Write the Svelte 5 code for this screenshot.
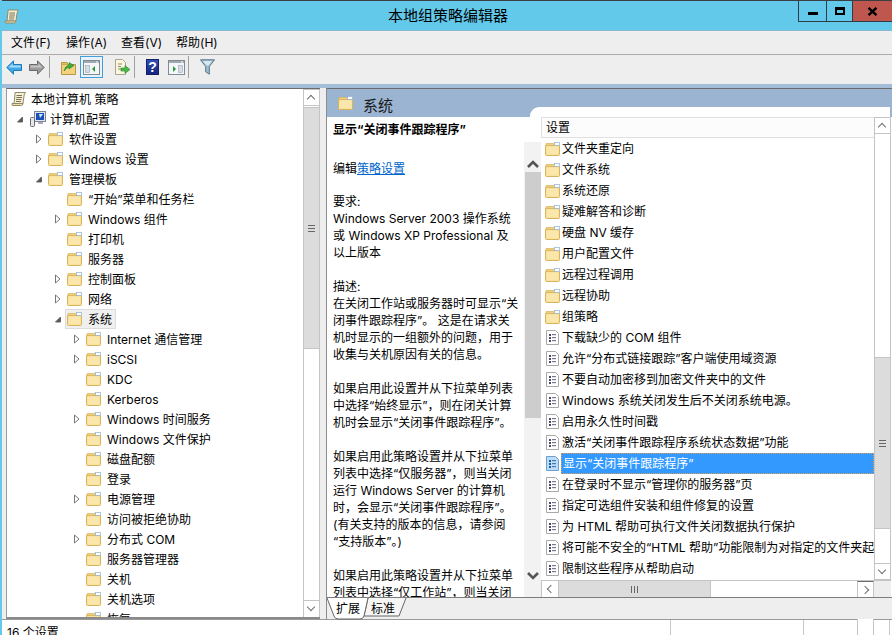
<script>
  const tree = [
    { t: '本地计算机 策略', l: 0, i: 'scroll' },
    { t: '计算机配置', l: 1, i: 'pc', a: 'o' },
    { t: '软件设置', l: 2, a: 'c' },
    { t: 'Windows 设置', l: 2, a: 'c' },
    { t: '管理模板', l: 2, a: 'o' },
    { t: '“开始”菜单和任务栏', l: 3 },
    { t: 'Windows 组件', l: 3, a: 'c' },
    { t: '打印机', l: 3 },
    { t: '服务器', l: 3 },
    { t: '控制面板', l: 3, a: 'c' },
    { t: '网络', l: 3, a: 'c' },
    { t: '系统', l: 3, a: 'o', sel: true },
    { t: 'Internet 通信管理', l: 4, a: 'c' },
    { t: 'iSCSI', l: 4, a: 'c' },
    { t: 'KDC', l: 4 },
    { t: 'Kerberos', l: 4 },
    { t: 'Windows 时间服务', l: 4, a: 'c' },
    { t: 'Windows 文件保护', l: 4 },
    { t: '磁盘配额', l: 4 },
    { t: '登录', l: 4 },
    { t: '电源管理', l: 4, a: 'c' },
    { t: '访问被拒绝协助', l: 4 },
    { t: '分布式 COM', l: 4, a: 'c' },
    { t: '服务器管理器', l: 4 },
    { t: '关机', l: 4 },
    { t: '关机选项', l: 4 },
    { t: '恢复', l: 4 }
  ];
  const folders = ['文件夹重定向', '文件系统', '系统还原', '疑难解答和诊断', '硬盘 NV 缓存', '用户配置文件', '远程过程调用', '远程协助', '组策略'];
  const settings = [
    '下载缺少的 COM 组件',
    '允许“分布式链接跟踪”客户端使用域资源',
    '不要自动加密移到加密文件夹中的文件',
    'Windows 系统关闭发生后不关闭系统电源。',
    '启用永久性时间戳',
    '激活“关闭事件跟踪程序系统状态数据”功能',
    '显示“关闭事件跟踪程序”',
    '在登录时不显示“管理你的服务器”页',
    '指定可选组件安装和组件修复的设置',
    '为 HTML 帮助可执行文件关闭数据执行保护',
    '将可能不安全的“HTML 帮助”功能限制为对指定的文件夹起作用',
    '限制这些程序从帮助启动'
  ];
  const paragraphs = [
    ['要求:', 'Windows Server 2003 操作系统', '或 Windows XP Professional 及', '以上版本'],
    ['描述:', '在关闭工作站或服务器时可显示“关', '闭事件跟踪程序”。 这是在请求关', '机时显示的一组额外的问题，用于', '收集与关机原因有关的信息。'],
    ['如果启用此设置并从下拉菜单列表', '中选择“始终显示”，则在闭关计算', '机时会显示“关闭事件跟踪程序”。'],
    ['如果启用此策略设置并从下拉菜单', '列表中选择“仅服务器”，则当关闭', '运行 Windows Server 的计算机', '时，会显示“关闭事件跟踪程序”。', '(有关支持的版本的信息，请参阅', '“支持版本”。)'],
    ['如果启用此策略设置并从下拉菜单', '列表中选择“仅工作站”，则当关闭']
  ];
</script>

{#snippet folder()}
  <svg class="ico" width="15" height="14" viewBox="0 0 15 14">
    <path d="M0.5 3.5V12.5Q0.5 13.5 1.5 13.5H13.5Q14.5 13.5 14.5 12.5V3.5Z" fill="#f6dc90" stroke="#d9b45e"/>
    <path d="M1 1.5H9L10 3.5H1Z" fill="#eed07c" stroke="#d9b45e" stroke-width=".7"/>
    <rect x="9.5" y="0.5" width="5" height="3" fill="#fff" stroke="#8fb0d0" stroke-width=".7"/>
    <rect x="1.5" y="4.5" width="12" height="8" fill="#fbe7ac"/>
  </svg>
{/snippet}

{#snippet doc(sel)}
  <svg class="ico" width="13" height="15" viewBox="0 0 13 15">
    <path d="M.5.5H9.5L12.5 3.5V14.5H.5Z" fill={sel ? '#bcdcf8' : '#fff'} stroke={sel ? '#6a9fd0' : '#a8a8a8'}/>
    <g fill={sel ? '#1d5f9c' : '#4a4a6a'}>
      <rect x="3" y="4" width="2" height="2"/><rect x="6" y="4" width="4" height="1.2" opacity=".75"/>
      <rect x="3" y="7" width="2" height="2"/><rect x="6" y="7" width="4" height="1.2" opacity=".75"/>
      <rect x="3" y="10" width="2" height="2"/><rect x="6" y="10" width="4" height="1.2" opacity=".75"/>
    </g>
  </svg>
{/snippet}

{#snippet scroll(w, h)}
  <svg class="ico" width={w} height={h} viewBox="0 0 16 16">
    <path d="M4 1.5H14.5Q13 3 13 5L12 12.5H3L4 3Z" fill="#f7efcf" stroke="#8f8a6c"/>
    <path d="M1 12.5H12Q11.5 14.5 10.5 14.5H2Q.5 14.5 1 12.5Z" fill="#f0dfa6" stroke="#8f8a6c"/>
    <path d="M5.5 4.5H11M5.3 6.5H11M5 8.5H10.5M5 10.5H10" stroke="#77745e"/>
  </svg>
{/snippet}

{#snippet winpane(side)}
  <svg width="17" height="15" viewBox="0 0 17 15">
    <rect x=".5" y=".5" width="16" height="14" fill="#f4f6f8" stroke="#808b96"/>
    <rect x="1" y="1" width="15" height="2" fill="#a0a8b0"/>
    <rect x="13" y="1.5" width="2" height="1" fill="#fff"/>
    {#if side === 'l'}
      <rect x="2.5" y="5.5" width="4" height="7" fill="#d4dde6" stroke="#9aa7b4" stroke-width=".6"/>
      <path d="M12 6V12L9 9Z" fill="#2c9a3a"/>
    {:else}
      <rect x="10.5" y="5.5" width="4" height="7" fill="#d4dde6" stroke="#9aa7b4" stroke-width=".6"/>
      <path d="M5 6V12L8 9Z" fill="#2c9a3a"/>
    {/if}
  </svg>
{/snippet}

<div class="window">
  <header class="titlebar">
    <div class="tb-icon">{@render scroll(16, 17)}</div>
    <div class="title">本地组策略编辑器</div>
    <div class="controls">
      <button class="ctl"><span class="min"></span></button>
      <button class="ctl"><span class="max"></span></button>
      <button class="ctl close">
        <svg width="11" height="9" viewBox="0 0 11 9"><path d="M1.5 .8L9.5 8.2M9.5 .8L1.5 8.2" stroke="#000" stroke-width="2.4"/></svg>
      </button>
    </div>
  </header>

  <nav class="menubar">
    <span>文件(F)</span><span>操作(A)</span><span>查看(V)</span><span>帮助(H)</span>
  </nav>

  <div class="toolbar">
    <button class="tool t-back">
      <svg width="16" height="15" viewBox="0 0 16 15"><path d="M7.5.8L.8 7.5 7.5 14.2V10.5H15.5V4.5H7.5Z" fill="#3fa9e8" stroke="#1f78b8"/><path d="M6.5 3.5L2.5 7.5H14.5V5.5H6.5Z" fill="#a6dcf8"/></svg>
    </button>
    <button class="tool t-fwd">
      <svg width="16" height="15" viewBox="0 0 16 15"><path d="M8.5.8L15.2 7.5 8.5 14.2V10.5H.5V4.5H8.5Z" fill="#9a9a9a" stroke="#6a6a6a"/><path d="M9.5 3.5L13.5 7.5H1.5V5.5H9.5Z" fill="#c4c4c4"/></svg>
    </button>
    <i class="sep s-a"></i>
    <button class="tool t-up">
      <svg width="15" height="15" viewBox="0 0 15 15"><path d="M.5 4.5H14.5V14.5H.5Z" fill="#f3d27e" stroke="#bb9644"/><path d="M.5 4.5V2.5H6L7 4.5" fill="#e3bd62" stroke="#bb9644"/><path d="M3 11Q4 6 8 5V2.5L13 5.5 8 9V7Q5 8 3 11Z" fill="#3fae3c" stroke="#24812a" stroke-width=".6"/></svg>
    </button>
    <button class="tool active">{@render winpane('l')}</button>
    <button class="tool t-exp">
      <svg width="17" height="16" viewBox="0 0 17 16"><path d="M1.5 .5H8.5L11.5 3.5V15.5H1.5Z" fill="#fbf6dc" stroke="#a8a590"/><path d="M4 5H8M4 7.5H7M4 10H7" stroke="#8a8a70"/><path d="M7 9H11V6.5L16 10.5 11 14.5V12H7Z" fill="#4cb84a" stroke="#2a8a30" stroke-width=".6"/></svg>
    </button>
    <i class="sep"></i>
    <button class="tool help">?</button>
    <button class="tool t-win">{@render winpane('r')}</button>
    <i class="sep"></i>
    <button class="tool t-fil">
      <svg width="15" height="16" viewBox="0 0 15 16"><path d="M.5 .8H14.5L9.3 7.5V15.2L5.7 12.8V7.5Z" fill="#9cc0d0" stroke="#5b7486"/><path d="M3 2H12L8.5 6.5H6.5Z" fill="#d6e8f0"/></svg>
    </button>
  </div>
  <div class="strip"></div>

  <main class="panes">
    <section class="tree">
      <div class="tree-list">
        {#each tree as n}
          <div class="node lv{n.l}">
            <span class="tw">
              {#if n.a === 'c'}
                <svg width="10" height="10" viewBox="0 0 10 10"><path d="M1.5 1L6 5 1.5 9Z" fill="#fff" stroke="#777"/></svg>
              {:else if n.a === 'o'}
                <svg width="10" height="10" viewBox="0 0 10 10"><path d="M6.5 3V8H1.5Z" fill="#555" stroke="#666"/></svg>
              {/if}
            </span>
            <span class="item" class:sel={n.sel}>
              {#if n.i === 'scroll'}{@render scroll(16, 16)}
              {:else if n.i === 'pc'}
                <svg class="ico" width="16" height="16" viewBox="0 0 16 16"><rect x="4.5" y=".5" width="11" height="10" fill="#dfe6ee" stroke="#7a8694"/><rect x="6" y="2" width="8" height="7" fill="#1c50b4"/><path d="M9 3L13 3 10 7Z" fill="#c8ecfa"/><rect x="8" y="11" width="5" height="2" fill="#aab"/><rect x=".5" y="6.5" width="4" height="9" rx="1" fill="#e8e8e8" stroke="#667"/></svg>
              {:else}{@render folder()}{/if}
              <span class="label">{n.t}</span>
            </span>
          </div>
        {/each}
      </div>
      <div class="vscroll tree-sb">
        <span class="sbtn up"></span>
        <span class="thumb t-tree"><b></b></span>
        <span class="spring"></span>
        <span class="sbtn down"></span>
      </div>
    </section>

    <div class="splitter"></div>

    <section class="right">
      <div class="head">
        <div class="head-title">{@render folder()}<span>系统</span></div>
        <div class="head-notch"></div>
      </div>
      <div class="body">
        <article class="desc">
          <h4>显示“关闭事件跟踪程序”</h4>
          <p class="edit">编辑<a href="#x">策略设置</a></p>
          {#each paragraphs as para}
            <p>{#each para as line}<span>{line}</span>{/each}</p>
          {/each}
        </article>
        <div class="desc-sb">
          <svg width="12" height="8" viewBox="0 0 12 8"><path d="M1 7L6 2 11 7" fill="none" stroke="#555" stroke-width="2.6"/></svg>
          <span class="desc-thumb"></span>
          <span class="spring"></span>
          <svg width="12" height="8" viewBox="0 0 12 8"><path d="M1 1L6 6 11 1" fill="none" stroke="#555" stroke-width="2.6"/></svg>
        </div>
        <div class="list-wrap">
          <div class="list-main">
            <div class="list-col">
              <div class="colhead">设置</div>
              <div class="rows">
                {#each folders as f}
                  <div class="row">{@render folder()}<span>{f}</span></div>
                {/each}
                {#each settings as s, i}
                  <div class="row doc" class:selrow={i === 6}>{@render doc(i === 6)}<span>{s}</span></div>
                {/each}
              </div>
            </div>
            <div class="vscroll list-sb">
              <span class="sbtn up"></span>
              <span class="track-a"></span>
              <span class="thumb t-list"><b></b></span>
              <span class="spring"></span>
              <span class="sbtn down"></span>
            </div>
          </div>
          <div class="hscroll">
            <span class="hbtn left"></span>
            <span class="hthumb"><b></b></span>
            <span class="spring"></span>
            <span class="hbtn right"></span>
            <span class="corner"></span>
          </div>
        </div>
      </div>
      <div class="tabs">
        <svg class="tab-bg" width="90" height="22" viewBox="0 0 90 22">
          <path d="M41 0L37 18H72L79 0" fill="#f6f6f6" stroke="#666"/>
          <path d="M0 0L7 18Q8 21 11 21H33Q36 21 37 18L41 0Z" fill="#fff"/>
          <path d="M0 0L7 18Q8 21 11 21H33Q36 21 37 18L41 0" fill="none" stroke="#666"/>
        </svg>
        <span class="tab">扩展</span><span class="tab">标准</span>
      </div>
    </section>
  </main>

  <footer class="status">
    <span class="s1">16 个设置</span><span class="s2"></span><span class="s3"></span>
  </footer>
</div>

<style>
  :global(body) { margin: 0; overflow: hidden; background: #fff; }
  * { box-sizing: border-box; }
  .window { width: 892px; height: 635px; overflow: hidden; display: flex; flex-direction: column; background: #eee; border-left: 2px solid #63c9eb; color: #000; font: 12px/17px Inter, "Noto Sans", "Noto Sans CJK SC", sans-serif; }
  .ico { flex: none; display: block; }
  button { border: 0; padding: 0; background: none; display: flex; align-items: center; justify-content: center; font: inherit; }

  .titlebar { height: 31px; flex: none; margin-left: -2px; background: #63c9eb; border-top: 1px solid #3a3f44; border-bottom: 1px solid #8ab8d0; display: grid; grid-template-columns: 1fr auto 1fr; align-items: start; }
  .tb-icon { padding: 7px 0 0 4px; }
  .title { font-size: 15px; line-height: 29px; text-align: center; margin-left: 4px; }
  .controls { display: flex; justify-content: flex-end; height: 21px; }
  .ctl { width: 28px; height: 21px; border: 1px solid #2f3c46; border-top: 0; border-right: 0; }
  .ctl + .ctl { width: 26px; }
  .ctl.close { width: 40px; background: #c0574f; border-right: 0; }
  .min { width: 10px; height: 3px; background: #000; margin-top: 4px; }
  .max { width: 10px; height: 8px; border: 2px solid #000; border-top-width: 3px; }

  .menubar { height: 24px; flex: none; margin-left: -2px; padding-left: 11px; display: flex; gap: 17px; align-items: center; border-bottom: 1px solid #acacac; background: #eee; }
  .menubar span { width: 38px; white-space: nowrap; font-size: 12px; }

  .toolbar { height: 29px; flex: none; display: flex; align-items: flex-start; padding: 1px 0 0 4px; }
  .tool { height: 22px; flex: none; }
  .t-back { width: 16px; }
  .t-fwd { width: 16px; margin-left: 7px; }
  .sep { width: 1px; height: 22px; flex: none; background: #a0a0a0; margin-left: 3px; }
  .sep.s-a { margin-left: 4px; }
  .t-up { width: 15px; margin-left: 11px; }
  .active { width: 23px; margin-left: 4px; border: 1px solid #3fa0dc; background: #e8f2fa; }
  .t-exp { width: 17px; margin-left: 11px; }
  .help { width: 13px; height: 16px; margin: 3px 0 0 11px; background: linear-gradient(#3350b8, #14267c); color: #fff; font: bold 14px/16px "Liberation Sans", sans-serif; border: 1px solid #12206a; }
  .t-win { width: 17px; margin-left: 9px; }
  .t-fil { width: 15px; margin-left: 11px; }

  .strip { height: 4px; flex: none; background: #a3bdd8; }

  .panes { flex: 1; min-height: 0; display: flex; padding-left: 4px; }

  .tree { width: 314px; flex: none; height: 531px; display: flex; background: #fff; border-top: 1px solid #6c6c6c; border-left: 1px solid #9a9a9a; border-bottom: 2px solid #8a8a8a; }
  .tree-list { flex: 1; min-width: 0; overflow: hidden; }
  .node { height: 20px; display: flex; align-items: center; white-space: nowrap; }
  .lv0 { padding-left: 1px; } .lv1 { padding-left: 9px; }
  .lv2 { padding-left: 28px; } .lv3 { padding-left: 47px; } .lv4 { padding-left: 66px; }
  .tw { width: 10px; height: 10px; flex: none; display: block; }
  .tw svg { display: block; }
  .lv0 .tw { display: none; }
  .item { display: flex; align-items: center; height: 20px; margin-left: 1px; padding: 0 3px 0 1px; border: 1px solid transparent; }
  .lv1 .item { margin-left: 2px; }
  .label { margin-left: 5px; padding-left: 1px; line-height: 17px; }
  .lv0 .label, .lv1 .label { margin-left: 3px; }
  .item.sel { background: #f0f0f0; border-color: #dcdcdc; }

  .vscroll { width: 17px; flex: none; background: #fff; border-left: 1px solid #c4c4c4; border-right: 1px solid #c4c4c4; display: flex; flex-direction: column; }
  .sbtn { height: 17px; flex: none; display: block; position: relative; border-bottom: 1px solid #c4c4c4; border-top: 1px solid #c4c4c4; }
  .sbtn::after { content: ""; position: absolute; left: 4px; width: 5px; height: 5px; border: solid #707070; border-width: 1.5px 0 0 1.5px; transform: rotate(45deg); top: 6px; }
  .sbtn.down::after { transform: rotate(225deg); top: 3px; }
  .thumb { display: flex; flex: none; align-items: center; justify-content: center; background: #dcdcdc; border-top: 1px solid #c4c4c4; border-bottom: 1px solid #c4c4c4; }
  .thumb b { display: block; width: 7px; height: 7px; border-top: 1px solid #666; border-bottom: 1px solid #666; position: relative; }
  .thumb b::after { content: ""; position: absolute; left: 0; right: 0; top: 2px; height: 1px; background: #666; }
  .spring { flex: 1; }
  .t-tree { height: 242px; margin-top: 1px; }
  .tree-sb .sbtn.down { border-bottom: 0; }

  .splitter { width: 6px; flex: none; background: #eee; }

  .right { width: 566px; flex: none; height: 531px; display: flex; flex-direction: column; border-top: 1px solid #6c6c6c; border-left: 1px solid #8c8c8c; background: #fff; }
  .head { height: 28px; flex: none; background: #9ab4d2; display: flex; }
  .head-title { width: 203px; flex: none; padding: 7px 0 0 11px; display: flex; align-items: flex-start; }
  .head-title span { font-size: 15px; line-height: 17px; margin: 1px 0 0 10px; color: #1a1a1a; }
  .head-notch { flex: 1; margin-top: 18px; margin-right: 2px; background: #fff; border-top-left-radius: 9px; }

  .body { flex: 1; min-height: 0; display: flex; }
  .desc { width: 197px; flex: none; height: 481px; padding: 4px 0 0 6px; overflow: hidden; line-height: 17px; white-space: nowrap; }
  .desc h4 { margin: 0 0 22px; font-size: 12px; font-weight: 700; line-height: 17px; }
  .desc p { margin: 0 0 17px; }
  .desc p.edit { margin-bottom: 16px; }
  .desc p span { display: block; }
  .desc a { color: #0066cc; text-decoration: underline; }

  .desc-sb { width: 17px; flex: none; background: #f2f2f2; display: flex; flex-direction: column; align-items: center; margin-top: 25px; height: 456px; padding: 18px 0 18px; }
  .desc-sb svg { flex: none; }
  .desc-thumb { align-self: stretch; margin-top: 4px; height: 246px; flex: none; background: #cdcdcd; margin-left: 1px; }

  .list-wrap { width: 350px; flex: none; display: flex; flex-direction: column; height: 481px; }
  .list-main { display: flex; height: 463px; flex: none; }
  .list-col { width: 333px; flex: none; display: flex; flex-direction: column; overflow: hidden; }
  .colhead { height: 21px; flex: none; padding: 1px 0 0 4px; line-height: 18px; background: #fcfcfc; border-top: 1px solid #e0e0e0; border-bottom: 1px solid #e0e0e0; border-left: 1px solid #e0e0e0; }
  .rows { flex: 1; overflow: hidden; }
  .row { height: 21px; display: flex; align-items: center; padding-left: 4px; white-space: nowrap; gap: 2px; }
  .row.doc { padding-left: 5px; gap: 3px; }
  .row.selrow { gap: 2px; }
  .row.selrow span { flex: 1; align-self: stretch; line-height: 19px; padding-left: 1px; background: #3399ff; color: #fff; border: 1px dotted #e0a050; }
  .list-sb { height: 463px; }
  .track-a { height: 223px; flex: none; }
  .t-list { height: 172px; }

  .hscroll { height: 18px; flex: none; display: flex; background: #fff; border-top: 1px solid #c4c4c4; border-bottom: 1px solid #c4c4c4; border-left: 1px solid #c4c4c4; }
  .hbtn { width: 17px; flex: none; position: relative; border-right: 1px solid #c4c4c4; }
  .hbtn.right { border-left: 1px solid #c4c4c4; border-right: 1px solid #c4c4c4; }
  .hbtn::after { content: ""; position: absolute; top: 5px; left: 6px; width: 5px; height: 5px; border: solid #707070; border-width: 0 0 1.5px 1.5px; transform: rotate(45deg); }
  .hbtn.right::after { transform: rotate(225deg); left: 4px; }
  .hthumb { width: 152px; flex: none; background: #dcdcdc; display: flex; align-items: center; justify-content: center; border-right: 1px solid #c4c4c4; }
  .hthumb b { width: 7px; height: 7px; border-left: 1px solid #666; border-right: 1px solid #666; position: relative; }
  .hthumb b::after { content: ""; position: absolute; top: 0; bottom: 0; left: 2px; width: 1px; background: #666; }
  .corner { width: 17px; flex: none; background: #eee; }

  .tabs { height: 22px; flex: none; position: relative; background: #eee; border-top: 1px solid #7c7c7c; padding-left: 9px; display: flex; gap: 11px; }
  .tab-bg { position: absolute; left: 0; top: 0; }
  .tab { position: relative; width: 24px; line-height: 21px; }

  .status { height: 16px; flex: none; margin-left: -2px; padding-left: 2px; background: #fff; border-top: 1px solid #9a9a9a; display: flex; line-height: 17px; font-size: 12px; white-space: nowrap; }
  .s1 { width: 669px; padding: 4px 0 0 5px; border-right: 1px solid #c8c8c8; }
  .s2 { width: 133px; border-right: 1px solid #c8c8c8; }
  .s3 { width: 86px; border-right: 1px solid #c8c8c8; }
</style>
